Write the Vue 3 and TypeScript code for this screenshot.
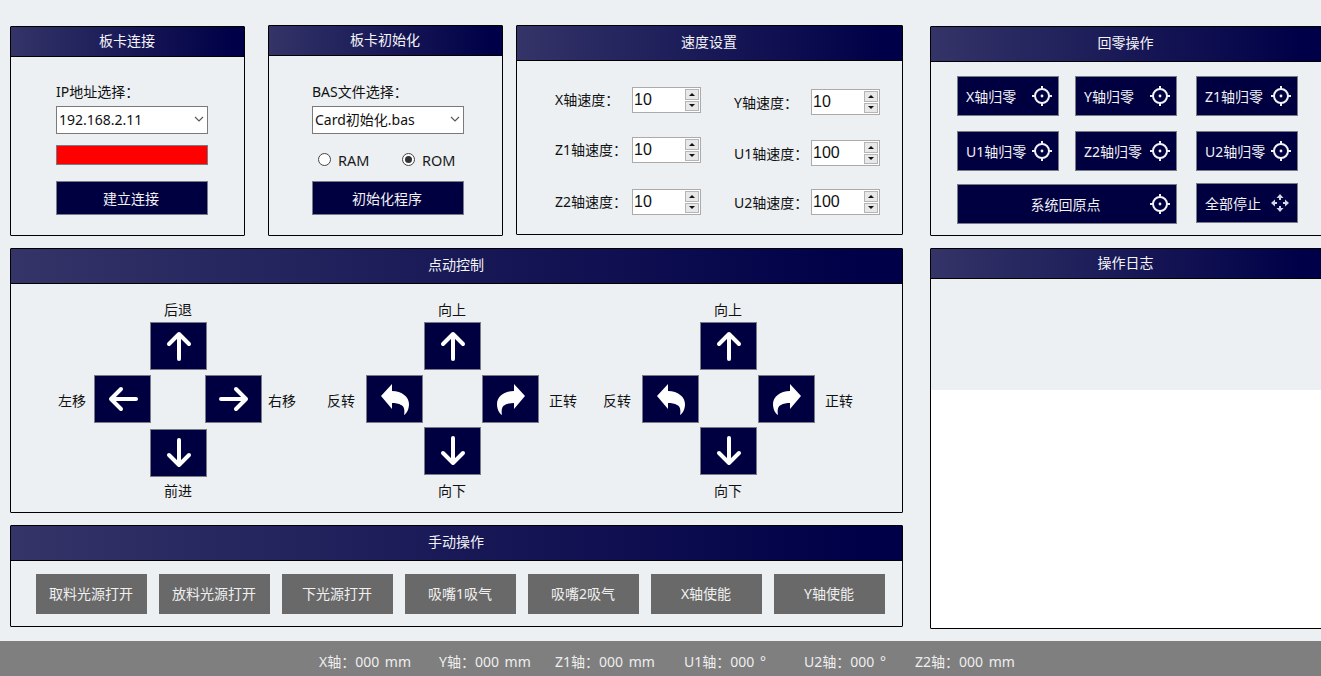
<script setup lang="ts">
const colon = '\uFF1A'
const leftSpeeds = [
  { label: 'X轴速度' + colon, value: '10' },
  { label: 'Z1轴速度' + colon, value: '10' },
  { label: 'Z2轴速度' + colon, value: '10' },
]
const rightSpeeds = [
  { label: 'Y轴速度' + colon, value: '10' },
  { label: 'U1轴速度' + colon, value: '100' },
  { label: 'U2轴速度' + colon, value: '100' },
]
const homes = ['X轴归零', 'Y轴归零', 'Z1轴归零', 'U1轴归零', 'Z2轴归零', 'U2轴归零']
const pads = [
  { cls: 'pad-a', top: '后退', bottom: '前进', left: '左移', right: '右移', turn: false },
  { cls: 'pad-b', top: '向上', bottom: '向下', left: '反转', right: '正转', turn: true },
  { cls: 'pad-c', top: '向上', bottom: '向下', left: '反转', right: '正转', turn: true },
]
const manual = ['取料光源打开', '放料光源打开', '下光源打开', '吸嘴1吸气', '吸嘴2吸气', 'X轴使能', 'Y轴使能']
const axes = [
  'X轴' + colon + '000 mm',
  'Y轴' + colon + '000 mm',
  'Z1轴' + colon + '000 mm',
  'U1轴' + colon + '000 °',
  'U2轴' + colon + '000 °',
  'Z2轴' + colon + '000 mm',
]
</script>

<template>
  <div class="app">
    <main class="main">
      <div class="left">
        <div class="top-row">
          <section class="panel p-conn">
            <h2 class="head h31">板卡连接</h2>
            <div class="form">
              <label class="field-label">IP地址选择{{ colon }}</label>
              <div class="select">192.168.2.11<svg width="10" height="6" viewBox="0 0 10 6"><path d="M1 1l4 4 4-4" fill="none" stroke="#555" stroke-width="1.1" /></svg></div>
              <div class="status-lamp"></div>
              <button class="navy form-btn">建立连接</button>
            </div>
          </section>

          <section class="panel p-init">
            <h2 class="head h31">板卡初始化</h2>
            <div class="form">
              <label class="field-label">BAS文件选择{{ colon }}</label>
              <div class="select">Card初始化.bas<svg width="10" height="6" viewBox="0 0 10 6"><path d="M1 1l4 4 4-4" fill="none" stroke="#555" stroke-width="1.1" /></svg></div>
              <div class="radios">
                <span class="radio"><i class="dot"></i>RAM</span>
                <span class="radio"><i class="dot on"></i>ROM</span>
              </div>
              <button class="navy form-btn">初始化程序</button>
            </div>
          </section>

          <section class="panel p-speed">
            <h2 class="head h36">速度设置</h2>
            <div class="speed">
              <div class="sp-col sp-left">
                <div v-for="s in leftSpeeds" :key="s.label" class="sp-row">
                  <span class="sp-label">{{ s.label }}</span>
                  <div class="spin">
                    <input class="spin-input" :value="s.value" readonly />
                    <span class="spin-btns"><b class="up"></b><b class="down"></b></span>
                  </div>
                </div>
              </div>
              <div class="sp-col sp-right">
                <div v-for="s in rightSpeeds" :key="s.label" class="sp-row">
                  <span class="sp-label">{{ s.label }}</span>
                  <div class="spin">
                    <input class="spin-input" :value="s.value" readonly />
                    <span class="spin-btns"><b class="up"></b><b class="down"></b></span>
                  </div>
                </div>
              </div>
            </div>
          </section>
        </div>

        <section class="panel p-jog">
          <h2 class="head h36">点动控制</h2>
          <div class="pads">
            <div v-for="p in pads" :key="p.cls" class="pad" :class="p.cls">
              <span class="cap cap-top">{{ p.top }}</span>
              <button class="navy arrow a-up">
                <svg width="26" height="30" viewBox="0 0 26 30"><path d="M13 28V3M3 13L13 3l10 10" fill="none" stroke="#fff" stroke-width="4" stroke-linecap="round" stroke-linejoin="round" /></svg>
              </button>
              <span class="cap cap-left">{{ p.left }}</span>
              <button class="navy arrow a-left">
                <svg v-if="!p.turn" width="30" height="26" viewBox="0 0 30 26"><path d="M28 13H3M13 3L3 13l10 10" fill="none" stroke="#fff" stroke-width="4" stroke-linecap="round" stroke-linejoin="round" /></svg>
                <svg v-else width="28" height="31" viewBox="0 0 28 31"><path d="M0 12L11 0v7C21 7 28 13 28 20C28 25 26 29 23 31C24 26 23 22 20 21C18 19.500 14 19 11 19v6z" fill="#fff" /></svg>
              </button>
              <button class="navy arrow a-right">
                <svg v-if="!p.turn" width="30" height="26" viewBox="0 0 30 26"><path d="M2 13h25M17 3l10 10-10 10" fill="none" stroke="#fff" stroke-width="4" stroke-linecap="round" stroke-linejoin="round" /></svg>
                <svg v-else width="28" height="31" viewBox="0 0 28 31"><path d="M28 12L17 0v7C7 7 0 13 0 20C0 25 2 29 5 31C4 26 5 22 8 21C10 19.500 14 19 17 19v6z" fill="#fff" /></svg>
              </button>
              <span class="cap cap-right">{{ p.right }}</span>
              <button class="navy arrow a-down">
                <svg width="26" height="30" viewBox="0 0 26 30"><path d="M13 2v25M3 17l10 10 10-10" fill="none" stroke="#fff" stroke-width="4" stroke-linecap="round" stroke-linejoin="round" /></svg>
              </button>
              <span class="cap cap-bottom">{{ p.bottom }}</span>
            </div>
          </div>
        </section>

        <section class="panel p-manual">
          <h2 class="head h36">手动操作</h2>
          <div class="manual">
            <button v-for="m in manual" :key="m" class="gray">{{ m }}</button>
          </div>
        </section>
      </div>

      <div class="right">
        <section class="panel p-home">
          <h2 class="head h36">回零操作</h2>
          <div class="homes">
            <button v-for="h in homes" :key="h" class="navy home-btn">
              <span>{{ h }}</span>
              <svg class="target" width="20" height="20" viewBox="0 0 20 20"><circle cx="10" cy="10" r="7" fill="none" stroke="#f2f2f6" stroke-width="2" /><circle cx="10" cy="10" r="1.400" fill="#f2f2f6" /><path d="M10 0v4M10 16v4M0 10h4M16 10h4" stroke="#f2f2f6" stroke-width="2" /></svg>
            </button>
            <button class="navy home-btn wide">
              <span>系统回原点</span>
              <svg class="target" width="20" height="20" viewBox="0 0 20 20"><circle cx="10" cy="10" r="7" fill="none" stroke="#f2f2f6" stroke-width="2" /><circle cx="10" cy="10" r="1.400" fill="#f2f2f6" /><path d="M10 0v4M10 16v4M0 10h4M16 10h4" stroke="#f2f2f6" stroke-width="2" /></svg>
            </button>
            <button class="navy home-btn stop">
              <span>全部停止</span>
              <svg class="move" width="18" height="18" viewBox="0 0 18 18"><path d="M9 0l3.500 4h-7zM9 18l-3.500-4h7zM0 9l4-3.500v7zM18 9l-4 3.500v-7z" fill="#d4d7e6" /><path d="M9 3v3M9 12v3M3 9h3M12 9h3" stroke="#d4d7e6" stroke-width="2" /></svg>
            </button>
          </div>
        </section>

        <section class="panel p-log">
          <h2 class="head h30">操作日志</h2>
          <div class="log-blank"></div>
          <div class="log-area"></div>
        </section>
      </div>
    </main>

    <footer class="status">
      <span v-for="a in axes" :key="a">{{ a }}</span>
    </footer>
  </div>
</template>

<style>
html, body { margin: 0; overflow: hidden; background: #ecf0f3; }
</style>

<style scoped>
.app {
  width: 1321px;
  height: 676px;
  overflow: hidden;
  display: flex;
  flex-direction: column;
  background: #ecf0f3;
  font-family: "Noto Sans", "Noto Sans CJK SC", sans-serif;
  font-size: 14px;
  color: #111;
}
.main {
  height: 641px;
  flex: none;
  display: flex;
  padding: 25px 0 0 10px;
  box-sizing: border-box;
}
.left { width: 893px; flex: none; }
.right { width: 392px; flex: none; margin-left: 27px; }
.top-row { display: flex; align-items: flex-start; }

.panel {
  box-sizing: border-box;
  border: 1px solid #000;
  border-radius: 1px;
  display: flex;
  flex-direction: column;
}
.head {
  margin: 0;
  flex: none;
  box-sizing: border-box;
  border-bottom: 1px solid #000;
  display: flex;
  align-items: center;
  justify-content: center;
  padding: 0 1px 4px 0;
  background: linear-gradient(to right, #343468, #000048 95%);
  color: #f4f4f8;
  font-size: 14px;
  font-weight: 400;
}
.h30 { height: 30px; }
.h31 { height: 30px; }
.h36 { height: 35px; }

.navy {
  background: #000040;
  border: 1px solid #7b7b85;
  color: #f2f2f6;
  font: inherit;
  padding: 0;
  box-sizing: border-box;
}

/* connect & init */
.p-conn { width: 235px; height: 210px; margin-top: 1px; }
.p-init { width: 235px; height: 211px; margin-left: 23px; }
.p-speed { width: 387px; height: 210px; margin-left: 13px; }
.form { padding: 25px 0 0 45px; display: flex; flex-direction: column; }
.p-init .form { padding-top: 26px; padding-left: 43px; }
.field-label { height: 20px; line-height: 20px; margin-bottom: 4px; }
.select {
  width: 152px;
  height: 28px;
  box-sizing: border-box;
  border: 1px solid #7a7a7a;
  background: #fff;
  padding: 0 3px 2px 2px;
  display: flex;
  align-items: center;
  justify-content: space-between;
}
.status-lamp {
  width: 152px;
  height: 20px;
  box-sizing: border-box;
  margin-top: 11px;
  background: #ff0000;
  border: 1px solid #7b7b85;
}
.form-btn { width: 152px; height: 34px; margin-top: 16px; padding-right: 2px; }
.radios { height: 47px; box-sizing: border-box; padding: 4px 0 0 6px; display: flex; align-items: center; }
.radio { display: flex; align-items: center; width: 84px; color: #1a1a1a; font-size: 14.500px; }
.dot {
  width: 13px;
  height: 13px;
  box-sizing: border-box;
  border: 1px solid #444;
  border-radius: 50%;
  background: #fff;
  margin-right: 7px;
  position: relative;
}
.dot.on::after {
  content: "";
  position: absolute;
  inset: 2px;
  border-radius: 50%;
  background: #333;
}
.p-init .form-btn { margin-top: 0; }

/* speed */
.speed { display: flex; padding-left: 38px; }
.sp-col { display: flex; flex-direction: column; }
.sp-left { width: 179px; padding-top: 26px; }
.sp-right { padding-top: 28px; }
.sp-row { display: flex; height: 26px; }
.sp-left .sp-row:nth-child(2) { margin-top: 24px; }
.sp-left .sp-row:nth-child(3) { margin-top: 26px; }
.sp-right .sp-row:nth-child(2) { margin-top: 25px; }
.sp-right .sp-row:nth-child(3) { margin-top: 23px; }
.sp-label { width: 77px; line-height: 26px; padding-top: 1px; white-space: nowrap; }
.sp-left .sp-label { padding-top: 0; }
.spin {
  width: 69px;
  height: 26px;
  box-sizing: border-box;
  border: 1px solid #ababab;
  background: #fff;
  display: flex;
  align-items: center;
}
.spin-input {
  width: 50px;
  border: 0;
  outline: 0;
  padding: 0 0 0 1px;
  background: transparent;
  font: 16px "Liberation Sans", Arial, sans-serif;
  color: #111;
}
.spin-btns {
  width: 14px;
  height: 22px;
  margin-left: 1px;
  display: flex;
  flex-direction: column;
  gap: 1px;
  box-sizing: border-box;
}
.spin-btns b {
  flex: 1;
  background: #e8e8e8;
  border: 1px solid #b5b5b5;
  display: flex;
  align-items: center;
  justify-content: center;
  box-sizing: border-box;
}
.spin-btns b::after {
  content: "";
  border-left: 3.500px solid transparent;
  border-right: 3.500px solid transparent;
}
.up::after { border-bottom: 3px solid #111; }
.down::after { border-top: 3px solid #111; }

/* jog */
.p-jog { height: 265px; margin-top: 12px; }
.pads { display: flex; padding-left: 47px; }
.pad {
  display: grid;
  grid-template-rows: 38px 48px 5px 48px 6px 48px 26px;
}
.pad-a { grid-template-columns: 36px 56px 57px 55px 34px; }
.pad-b, .pad-c { grid-template-columns: 39px 58px 57px 58px 38px; grid-template-rows: 38px 48px 5px 48px 4px 48px 28px; }
.pad-b { margin-left: 31px; }
.pad-c { margin-left: 26px; }
.arrow { display: flex; align-items: center; justify-content: center; width: 57px; height: 48px; }
.a-up { grid-column: 3; grid-row: 2; }
.a-left { grid-column: 2; grid-row: 4; }
.a-right { grid-column: 4; grid-row: 4; justify-self: end; }
.a-down { grid-column: 3; grid-row: 6; }
.cap { line-height: 20px; white-space: nowrap; }
.cap-top { grid-column: 3; grid-row: 1; justify-self: center; align-self: end; padding-bottom: 2px; margin-left: -1px; }
.cap-bottom { grid-column: 3; grid-row: 7; justify-self: center; align-self: end; padding-bottom: 2px; margin-left: -1px; }
.cap-left { grid-column: 1; grid-row: 4; justify-self: start; align-self: center; padding-top: 4px; }
.cap-right { grid-column: 5; grid-row: 4; justify-self: end; align-self: center; padding-top: 4px; }

/* manual */
.p-manual { height: 102px; margin-top: 12px; }
.manual { display: flex; gap: 12px; padding: 13px 0 0 25px; }
.gray {
  width: 111px;
  height: 40px;
  border: 0;
  padding: 0 1px 2px 0;
  background: #696969;
  color: #f0f0f0;
  font: inherit;
}

/* home */
.p-home { height: 210px; margin-top: 1px; }
.homes {
  display: grid;
  grid-template-columns: 102px 102px 105px;
  grid-template-rows: 40px 40px 40px;
  column-gap: 16px;
  row-gap: 15px;
  padding: 14px 0 0 26px;
}
.homes > :nth-child(3n) { margin-left: 3px; }
.home-btn {
  display: flex;
  align-items: center;
  justify-content: space-between;
  padding: 0 6px 0 8px;
  white-space: nowrap;
  height: 40px;
}
.wide { grid-column: 1 / 3; margin-top: -2px; }
.wide span { flex: 1; text-align: center; padding-left: 15px; }
.stop { margin-left: 3px; margin-top: -3px; padding-right: 7px; }
.move { margin-right: 1px; }

/* log */
.p-log { height: 381px; margin-top: 12px; }
.log-blank { height: 111px; flex: none; }
.log-area { flex: 1; background: #fff; }

/* status */
.status {
  flex: 1;
  background: #7f7f7f;
  color: #eeeeee;
  display: grid;
  grid-template-columns: 120px 116px 129px 120px 111px auto;
  align-items: center;
  padding: 4px 0 0 319px;
  box-sizing: border-box;
  white-space: nowrap;
  word-spacing: 2px;
}
</style>
